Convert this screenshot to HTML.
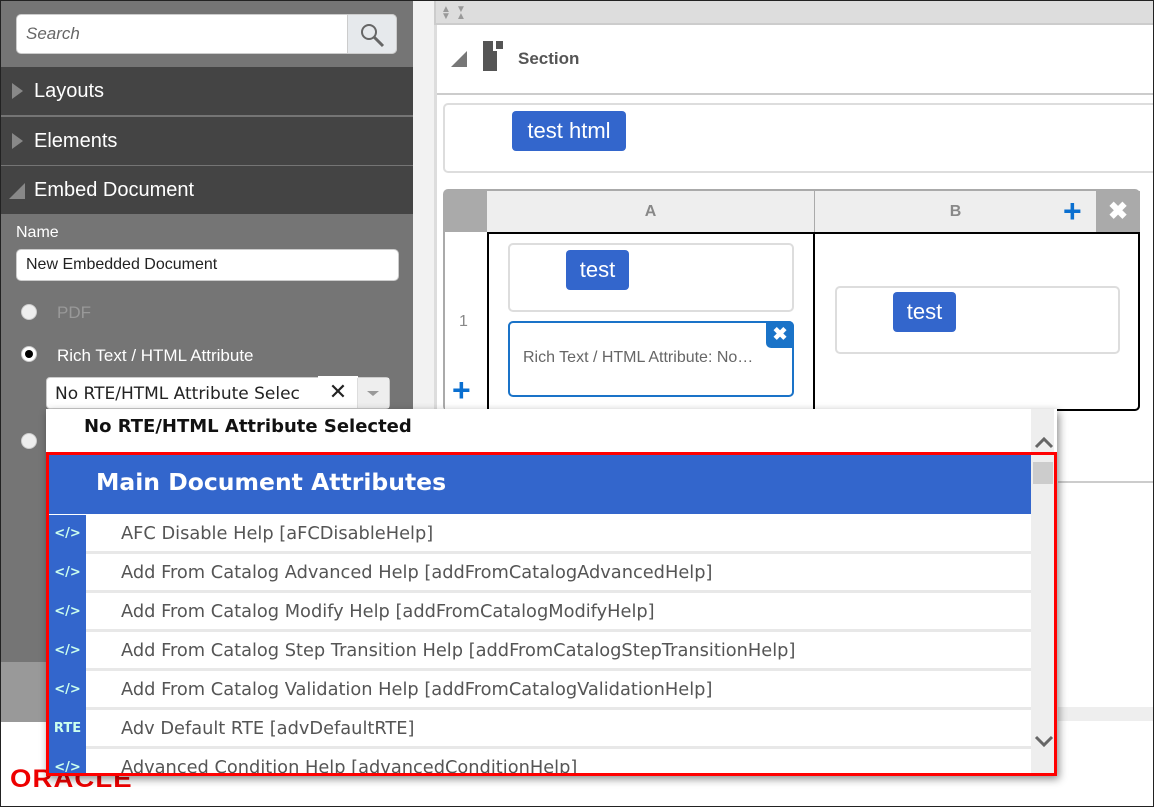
<!DOCTYPE html>
<html><head><style>
*{box-sizing:border-box;margin:0;padding:0}
body{width:1154px;height:807px;position:relative;overflow:hidden;background:#fff;font-family:"Liberation Sans",Arial,sans-serif}
.a{position:absolute}
.hdr{position:absolute;left:0;width:413px;background:#444;color:#fff;font-size:20px;padding-left:34px;line-height:48px}
.tri{position:absolute;left:12px;top:16px;width:0;height:0;border-top:8px solid transparent;border-bottom:8px solid transparent;border-left:11px solid #888}
.btn{position:absolute;background:#3366cc;color:#fff;border-radius:4px;font-size:22px;text-align:center}
.radio{position:absolute;width:16px;height:16px;border-radius:50%;background:#eee;border:1px solid #ccc}
.row{position:absolute;left:49px;width:982px;height:39px;border-bottom:3px solid #e8e8e8;background:#fff}
.row .ic{position:absolute;left:0;top:0;width:37px;height:39px;background:#3366cc;color:#cfe;font:bold 13px "DejaVu Sans",sans-serif;line-height:37px;text-align:center}
.row .t{position:absolute;left:72px;top:0;font:17.8px "DejaVu Sans",sans-serif;line-height:37px;color:#555;white-space:nowrap}
</style></head><body>
<div class="a" style="left:0;top:0;width:413px;height:662px;background:#757575"></div>
<div class="a" style="left:0;top:662px;width:413px;height:60px;background:#999"></div>
<div class="a" style="left:413px;top:0;width:21px;height:722px;background:#f2f2f2"></div>
<div class="a" style="left:16px;top:14px;width:381px;height:40px;background:#fff;border:1px solid #ccc;border-radius:5px"></div>
<div class="a" style="left:26px;top:24px;font-size:17px;font-style:italic;color:#666">Search</div>
<div class="a" style="left:347px;top:14px;width:50px;height:40px;background:#e6e9ec;border:1px solid #ccc;border-radius:0 5px 5px 0"></div>
<svg class="a" style="left:358px;top:21px" width="28" height="28"><circle cx="11" cy="11" r="7" fill="none" stroke="#666" stroke-width="2"/><line x1="16" y1="16" x2="25" y2="25" stroke="#666" stroke-width="3"/></svg>
<div class="hdr" style="top:67px"><span class="tri"></span>Layouts</div>
<div class="hdr" style="top:117px"><span class="tri"></span>Elements</div>
<div class="hdr" style="top:166px;"><span class="a" style="left:9px;top:17px;border-left:16px solid transparent;border-bottom:16px solid #888"></span>Embed Document</div>
<div class="a" style="left:16px;top:224px;color:#fff;font-size:16px">Name</div>
<div class="a" style="left:16px;top:249px;width:383px;height:32px;background:#fff;border:1px solid #ccc;border-radius:5px;font-size:16px;line-height:30px;padding-left:9px;color:#222">New Embedded Document</div>
<div class="radio" style="left:21px;top:304px"></div>
<div class="a" style="left:57px;top:303px;font-size:17px;color:#999">PDF</div>
<div class="radio" style="left:21px;top:346px;background:#fff"><div class="a" style="left:3px;top:3px;width:8px;height:8px;border-radius:50%;background:#000"></div></div>
<div class="a" style="left:57px;top:346px;font-size:17px;color:#fff">Rich Text / HTML Attribute</div>
<div class="radio" style="left:21px;top:433px"></div>
<div class="a" style="left:46px;top:377px;width:344px;height:32px;background:#fff;border:1px solid #ccc;border-radius:4px;font:17px 'DejaVu Sans',sans-serif;line-height:32px;padding-left:8px;color:#222;overflow:hidden;white-space:nowrap">No RTE/HTML Attribute Selec</div>
<div class="a" style="left:318px;top:376px;width:40px;height:32px;background:#fff;font-size:22px;line-height:32px;text-align:center;color:#222">✕</div>
<div class="a" style="left:357px;top:378px;width:32px;height:30px;background:#eee;border-left:1px solid #ddd"></div>
<div class="a" style="left:367px;top:391px;border-left:6px solid transparent;border-right:6px solid transparent;border-top:5px solid #999"></div>
<div class="a" style="left:10px;top:765px;font:bold 25px 'Liberation Sans',sans-serif;color:#e00;letter-spacing:1px;transform:scaleX(1.1);transform-origin:left">ORACLE</div>

<div class="a" style="left:434px;top:0;width:720px;height:25px;background:#ddd;border-bottom:2px solid #ccc;border-left:2px solid #ccc"></div>
<div class="a" style="left:441px;top:6px;color:#999;font-size:10px;line-height:7px">▲<br>▼</div>
<div class="a" style="left:456px;top:6px;color:#999;font-size:10px;line-height:7px">▼<br>▲</div>
<div class="a" style="left:434px;top:25px;width:3px;height:697px;background:#ddd"></div>
<div class="a" style="left:451px;top:51px;border-left:16px solid transparent;border-bottom:16px solid #777"></div>
<div class="a" style="left:483px;top:41px;width:14px;height:30px;background:#555"></div>
<div class="a" style="left:493px;top:41px;width:10px;height:10px;background:#fff"></div>
<div class="a" style="left:496px;top:41px;width:7px;height:8px;background:#555"></div>
<div class="a" style="left:518px;top:49px;font-size:17px;font-weight:bold;color:#555">Section</div>
<div class="a" style="left:437px;top:93px;width:717px;height:2px;background:#ccc"></div>
<div class="a" style="left:443px;top:103px;width:720px;height:70px;border:2px solid #ddd;border-radius:5px"></div>
<div class="btn" style="left:512px;top:111px;width:114px;height:40px;line-height:40px">test html</div>
<div class="a" style="left:443px;top:189px;width:697px;height:222px;background:#aaa;border-radius:5px"></div>
<div class="a" style="left:445px;top:232px;width:42px;height:178px;background:#fff"></div>
<div class="a" style="left:487px;top:191px;width:327px;height:41px;background:#eee;font-size:16px;color:#888;font-weight:bold;text-align:center;line-height:41px">A</div>
<div class="a" style="left:815px;top:191px;width:281px;height:41px;background:#eee;font-size:16px;color:#888;font-weight:bold;text-align:center;line-height:41px">B</div>
<div class="a" style="left:1063px;top:199px;font-size:32px;font-weight:bold;color:#0a6fd0;line-height:24px">+</div>
<div class="a" style="left:1096px;top:191px;width:44px;height:41px;background:#aaa;color:#fff;font-size:24px;font-weight:bold;text-align:center;line-height:41px">✖</div>
<div class="a" style="left:487px;top:232px;width:653px;height:179px;background:#fff;border:2px solid #000;border-radius:0 0 5px 0"></div>
<div class="a" style="left:813px;top:232px;width:2px;height:178px;background:#000"></div>
<div class="a" style="left:459px;top:313px;font-size:16px;color:#888">1</div>
<div class="a" style="left:452px;top:378px;font-size:32px;font-weight:bold;color:#0a6fd0;line-height:24px">+</div>
<div class="a" style="left:508px;top:243px;width:286px;height:69px;border:2px solid #ddd;border-radius:5px"></div>
<div class="btn" style="left:566px;top:250px;width:63px;height:40px;line-height:40px">test</div>
<div class="a" style="left:508px;top:321px;width:286px;height:76px;border:2px solid #1a73c8;border-radius:5px"></div>
<div class="a" style="left:766px;top:321px;width:28px;height:27px;background:#1a73c8;color:#fff;font-size:18px;font-weight:bold;text-align:center;line-height:27px;border-radius:0 5px 0 5px">✖</div>
<div class="a" style="left:523px;top:349px;font-size:16px;color:#666">Rich Text / HTML Attribute: No…</div>
<div class="a" style="left:835px;top:286px;width:285px;height:68px;border:2px solid #ddd;border-radius:5px"></div>
<div class="btn" style="left:893px;top:292px;width:63px;height:40px;line-height:40px">test</div>
<div class="a" style="left:1058px;top:481px;width:96px;height:2px;background:#ccc"></div>
<div class="a" style="left:1058px;top:707px;width:96px;height:14px;background:#eee"></div>

<div class="a" style="left:46px;top:409px;width:1011px;height:367px;background:#fff;box-shadow:2px 3px 8px rgba(0,0,0,.45)"></div>
<div class="a" style="left:84px;top:416px;font:bold 18px 'DejaVu Sans',sans-serif;color:#111">No RTE/HTML Attribute Selected</div>
<div class="a" style="left:1031px;top:409px;width:23px;height:366px;background:#eee"></div>
<div class="a" style="left:1033px;top:462px;width:20px;height:22px;background:#ccc"></div>
<svg class="a" style="left:1034px;top:435px" width="20" height="14"><path d="M2 12 L10 4 L18 12" fill="none" stroke="#666" stroke-width="3"/></svg>
<svg class="a" style="left:1034px;top:735px" width="20" height="14"><path d="M2 2 L10 10 L18 2" fill="none" stroke="#666" stroke-width="3"/></svg>
<div class="a" style="left:49px;top:455px;width:982px;height:59px;background:#3366cc"></div>
<div class="a" style="left:96px;top:468px;font:bold 23.5px 'DejaVu Sans',sans-serif;color:#fff">Main Document Attributes</div>
<div class="row" style="top:515px"><div class="ic">&lt;/&gt;</div><div class="t">AFC Disable Help [aFCDisableHelp]</div></div>
<div class="row" style="top:554px"><div class="ic">&lt;/&gt;</div><div class="t">Add From Catalog Advanced Help [addFromCatalogAdvancedHelp]</div></div>
<div class="row" style="top:593px"><div class="ic">&lt;/&gt;</div><div class="t">Add From Catalog Modify Help [addFromCatalogModifyHelp]</div></div>
<div class="row" style="top:632px"><div class="ic">&lt;/&gt;</div><div class="t">Add From Catalog Step Transition Help [addFromCatalogStepTransitionHelp]</div></div>
<div class="row" style="top:671px"><div class="ic">&lt;/&gt;</div><div class="t">Add From Catalog Validation Help [addFromCatalogValidationHelp]</div></div>
<div class="row" style="top:710px"><div class="ic">RTE</div><div class="t">Adv Default RTE [advDefaultRTE]</div></div>
<div class="row" style="top:749px;height:24px;overflow:hidden;border:0"><div class="ic">&lt;/&gt;</div><div class="t">Advanced Condition Help [advancedConditionHelp]</div></div>
<div class="a" style="left:46px;top:452px;width:1011px;height:324px;border:3px solid #f00"></div>
<div class="a" style="left:0;top:0;width:1154px;height:807px;border:1px solid #222;pointer-events:none"></div>
</body></html>
